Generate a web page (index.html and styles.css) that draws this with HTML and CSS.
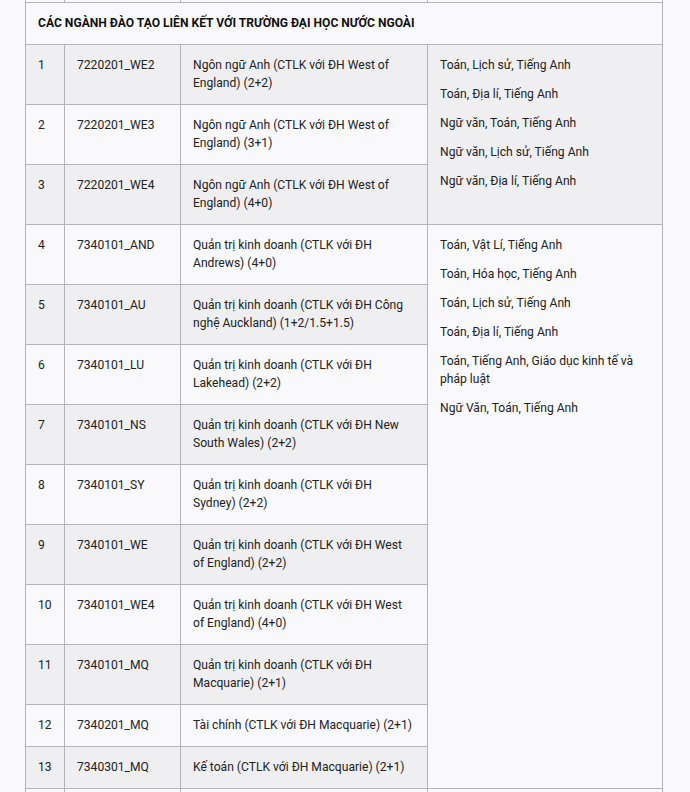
FILE: index.html
```html
<!DOCTYPE html>
<html lang="vi">
<head>
<meta charset="utf-8">
<title>Các ngành đào tạo liên kết</title>
<link rel="stylesheet" href="styles.css">
</head>
<body>
<div class="page">
<table class="programs">
  <colgroup>
    <col class="c-no">
    <col class="c-code">
    <col class="c-name">
    <col class="c-subj">
  </colgroup>
  <tbody>
    <tr class="edge">
      <td></td>
      <td></td>
      <td></td>
      <td></td>
    </tr>
    <tr class="section">
      <td colspan="4">CÁC NGÀNH ĐÀO TẠO LIÊN KẾT VỚI TRƯỜNG ĐẠI HỌC NƯỚC NGOÀI</td>
    </tr>
    <tr class="alt">
      <td>1</td>
      <td>7220201_WE2</td>
      <td>Ngôn ngữ Anh (CTLK với ĐH West of England) (2+2)</td>
      <td rowspan="3" class="subj">
        <p>Toán, Lịch sử, Tiếng Anh</p>
        <p>Toán, Địa lí, Tiếng Anh</p>
        <p>Ngữ văn, Toán, Tiếng Anh</p>
        <p>Ngữ văn, Lịch sử, Tiếng Anh</p>
        <p>Ngữ văn, Địa lí, Tiếng Anh</p>
      </td>
    </tr>
    <tr>
      <td>2</td>
      <td>7220201_WE3</td>
      <td>Ngôn ngữ Anh (CTLK với ĐH West of England) (3+1)</td>
    </tr>
    <tr class="alt">
      <td>3</td>
      <td>7220201_WE4</td>
      <td>Ngôn ngữ Anh (CTLK với ĐH West of England) (4+0)</td>
    </tr>
    <tr>
      <td>4</td>
      <td>7340101_AND</td>
      <td>Quản trị kinh doanh (CTLK với ĐH Andrews) (4+0)</td>
      <td rowspan="10" class="subj">
        <p>Toán, Vật Lí, Tiếng Anh</p>
        <p>Toán, Hóa học, Tiếng Anh</p>
        <p>Toán, Lịch sử, Tiếng Anh</p>
        <p>Toán, Địa lí, Tiếng Anh</p>
        <p>Toán, Tiếng Anh, Giáo dục kinh tế và pháp luật</p>
        <p>Ngữ Văn, Toán, Tiếng Anh</p>
      </td>
    </tr>
    <tr class="alt">
      <td>5</td>
      <td>7340101_AU</td>
      <td>Quản trị kinh doanh (CTLK với ĐH Công nghệ Auckland) (1+2/1.5+1.5)</td>
    </tr>
    <tr>
      <td>6</td>
      <td>7340101_LU</td>
      <td>Quản trị kinh doanh (CTLK với ĐH Lakehead) (2+2)</td>
    </tr>
    <tr class="alt">
      <td>7</td>
      <td>7340101_NS</td>
      <td>Quản trị kinh doanh (CTLK với ĐH New South Wales) (2+2)</td>
    </tr>
    <tr>
      <td>8</td>
      <td>7340101_SY</td>
      <td>Quản trị kinh doanh (CTLK với ĐH Sydney) (2+2)</td>
    </tr>
    <tr class="alt">
      <td>9</td>
      <td>7340101_WE</td>
      <td>Quản trị kinh doanh (CTLK với ĐH West of England) (2+2)</td>
    </tr>
    <tr>
      <td>10</td>
      <td>7340101_WE4</td>
      <td>Quản trị kinh doanh (CTLK với ĐH West of England) (4+0)</td>
    </tr>
    <tr class="alt">
      <td>11</td>
      <td>7340101_MQ</td>
      <td>Quản trị kinh doanh (CTLK với ĐH Macquarie) (2+1)</td>
    </tr>
    <tr>
      <td>12</td>
      <td>7340201_MQ</td>
      <td>Tài chính (CTLK với ĐH Macquarie) (2+1)</td>
    </tr>
    <tr class="alt">
      <td>13</td>
      <td>7340301_MQ</td>
      <td>Kế toán (CTLK với ĐH Macquarie) (2+1)</td>
    </tr>
    <tr class="edge">
      <td></td>
      <td></td>
      <td></td>
      <td></td>
    </tr>
  </tbody>
</table>
</div>
</body>
</html>
```

FILE: styles.css
```css
html, body {
  margin: 0;
  padding: 0;
  background: #f9f9fc;
}

.page {
  padding-left: 25px;
  font-family: Roboto, "Noto Sans", "Liberation Sans", sans-serif;
  font-size: 12.1px;
  line-height: 18px;
  color: #222;
}

.programs {
  width: 637px;
  margin-top: -40px;
  border-collapse: collapse;
  table-layout: fixed;
  background: #f9f9fc;
}

.c-no { width: 39px; }
.c-code { width: 116px; }
.c-name { width: 247px; }
.c-subj { width: 235px; }

.programs td {
  border: 1px solid #b4b4b8;
  padding: 11px 12px 12px;
  vertical-align: top;
  text-align: left;
}

.programs tr.edge td {
  height: 18px;
}

.programs tr.alt td {
  background: #efeff1;
}

.programs .section td {
  font-weight: 700;
  color: #111;
  text-transform: uppercase;
}

.subj p {
  margin: 0 0 11px;
}

.subj p:last-child {
  margin-bottom: 0;
}
```
